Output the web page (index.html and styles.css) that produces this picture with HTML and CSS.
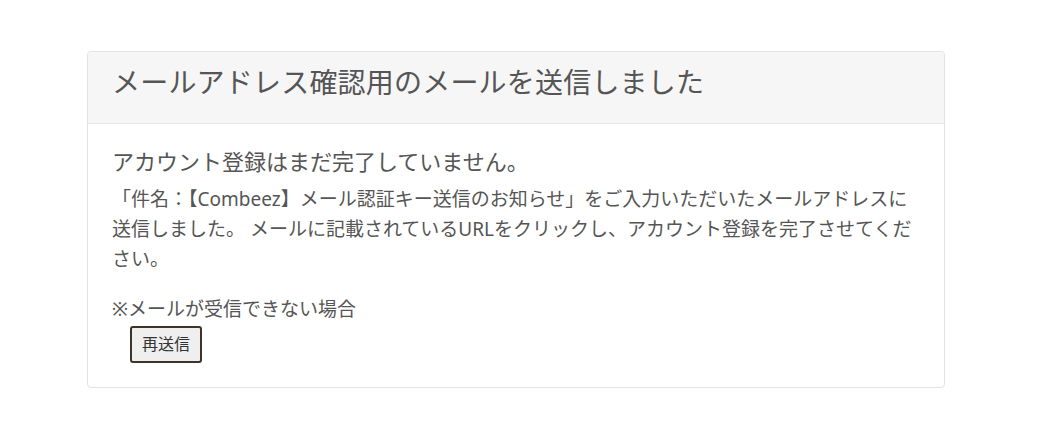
FILE: index.html
```html
<!DOCTYPE html>
<html lang="ja">
<head>
    <meta charset="UTF-8">
    <title>メールアドレス確認</title>
    <meta name="viewport" content="width=device-width, initial-scale=1.0">
    <link rel="stylesheet" href="styles.css">
</head>
<body>
    <div class="panel">
        <div class="panel-heading">
            <h3 class="panel-title">メールアドレス確認用のメールを送信しました</h3>
        </div>
        <div class="panel-body">
            <h4 class="lead">アカウント登録はまだ完了していません。</h4>
            <p class="message">「件名：【Combeez】メール認証キー送信のお知らせ」をご入力いただいたメールアドレスに送信しました。 メールに記載されているURLをクリックし、アカウント登録を完了させてください。</p>

            <p class="note">※メールが受信できない場合</p>
            <form class="resend-form" onsubmit="return false;">
                <button type="submit" class="resend-button">再送信</button>
            </form>
        </div>
    </div>
</body>
</html>
```

FILE: styles.css
```css
body, html {
    margin: 0;
    padding: 0;
    background-color: white;
    font-family: "Noto Sans", "Noto Sans CJK JP", sans-serif;
    color: #555;
}

.panel {
    width: 856px;
    margin: 51px 0 0 87px;
    border: 1px solid #e3e3e3;
    border-radius: 4px;
    background-color: #fff;
}

.panel-heading {
    padding: 10px 24px 21px;
    background-color: #f6f6f6;
    border-bottom: 1px solid #e5e5e5;
    border-radius: 4px 4px 0 0;
}

.panel-title {
    margin: 0;
    font-size: 28px;
    font-weight: normal;
    letter-spacing: 0.2px;
    line-height: 40px;
    color: #555;
}

.panel-body {
    padding: 22px 32px 24px 24px;
}

.lead {
    margin: 0 0 8px;
    font-size: 22px;
    font-weight: normal;
    line-height: 30px;
}

.message {
    margin: 0;
    font-size: 19px;
    line-height: 30px;
}

.note {
    margin: 20px 0 0;
    font-size: 19px;
    line-height: 30px;
}

.resend-form {
    margin: 2px 0 0 18px;
}

.resend-button {
    padding: 6px 10px;
    font-family: "Noto Sans", "Noto Sans CJK JP", sans-serif;
    font-size: 16px;
    line-height: 21px;
    color: #333;
    background-color: #efefef;
    border: 2px solid #3d3328;
    border-radius: 3px;
}
```
